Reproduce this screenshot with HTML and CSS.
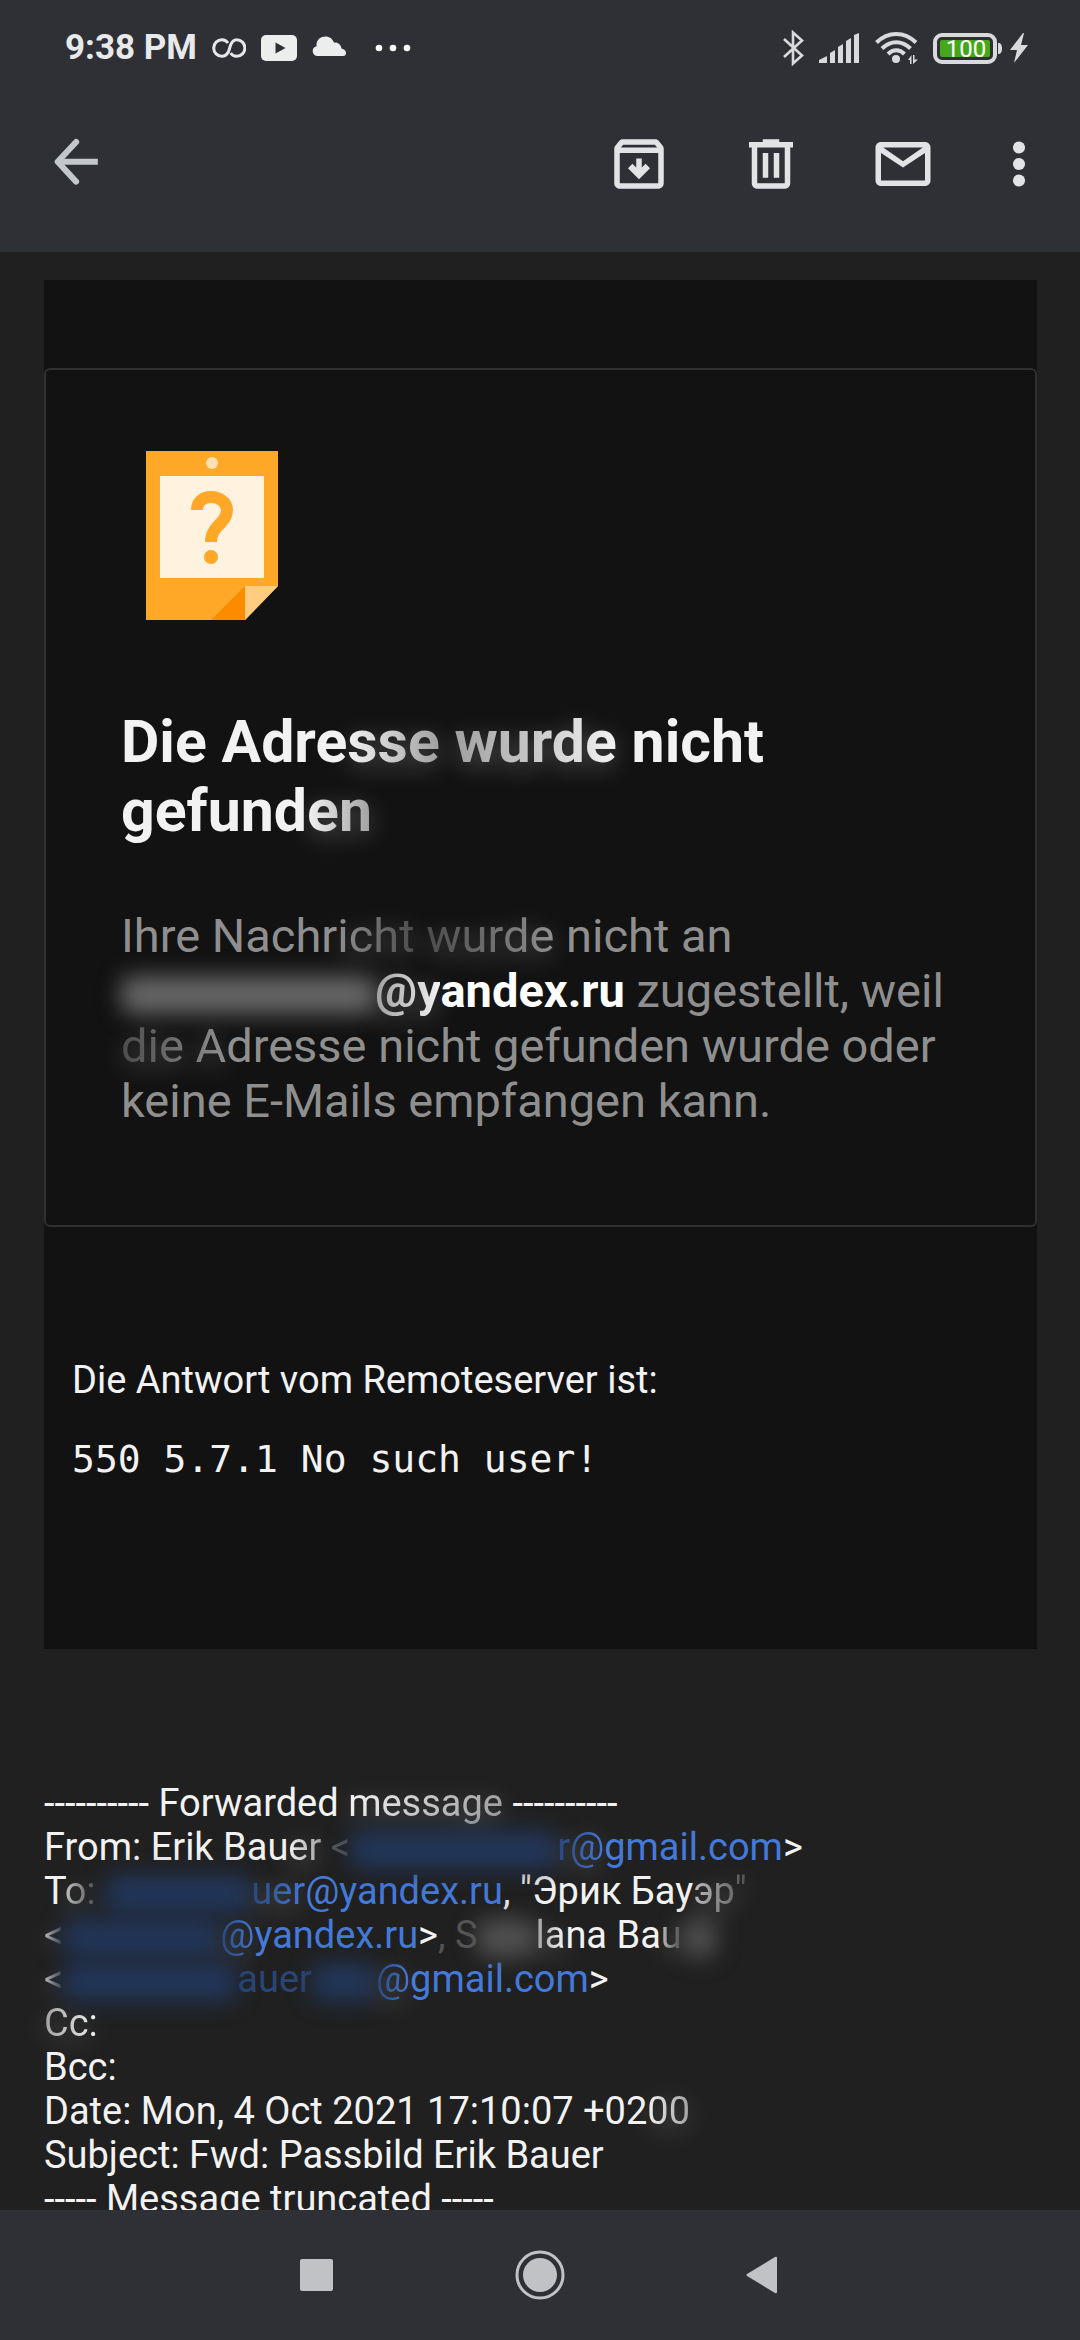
FILE: index.html
```html
<!DOCTYPE html>
<html lang="de">
<head>
<meta charset="utf-8">
<meta name="viewport" content="width=device-width, initial-scale=1">
<title>Die Adresse wurde nicht gefunden</title>
<link rel="stylesheet" href="styles.css">
</head>
<body>
<header class="top">
  <div class="status">
    <div class="status-group">
      <time class="clock">9:38 PM</time>
      <svg width="34" height="20" viewBox="0 0 34 20" fill="none" stroke="#e6e7e8" stroke-width="3"><path d="M16 5C14.500 2.800 12.300 1.700 10 1.700a8.200 8.200 0 0 0 0 16.600c3 0 5-1.800 6.600-4.800l2-6.500c1.400-3.400 3.200-5.300 6-5.300a8.200 8.200 0 0 1 0 16.600c-2.600 0-4.600-1.100-6-3.300"/></svg>
      <svg width="36" height="28" viewBox="0 0 36 28"><rect y="1" width="36" height="26" rx="5" fill="#eceded"/><path d="M14.500 8.500v11l10-5.500z" fill="#2e3035"/></svg>
      <svg width="34" height="28" viewBox="0 0 34 28"><path d="M5 22a5 5 0 0 1-.5-9.800C4 5.500 9 2.500 13.500 2.500c4 0 7 2.300 8.500 6 4-.5 7 2 7.500 6 3 .6 4.500 2.500 4.500 4.500s-1 3-3 3z" fill="#eceded"/></svg>
      <svg class="more-notes" width="36" height="8" viewBox="0 0 36 8" fill="#fff"><circle cx="4" cy="4" r="3.300"/><circle cx="18" cy="4" r="3.300"/><circle cx="32" cy="4" r="3.300"/></svg>
    </div>
    <div class="status-group">
      <svg width="22" height="36" viewBox="0 0 22 36" fill="none" stroke="#d9dadc" stroke-width="2.600"><path d="M2 9l18 16.500-9 8V2.500l9 8L2 27"/></svg>
      <svg width="41" height="32" viewBox="0 0 41 32" fill="#d9dadc"><path d="M0 31v-3l8-4v7zM11 31V21l5-3v13zM19 31V15l5-3v19zM27 31V9l5-3v25zM35 31V3l5-2v30z"/></svg>
      <svg width="43" height="34" viewBox="0 0 43 34"><g fill="none" stroke="#d9dadc" stroke-width="4"><path d="M1.500 11.500c11.500-11.500 28-11.500 39.500 0M7 17.500c8.500-8.500 20-8.500 28.500 0M13 23c5-5 11.500-5 16.500 0"/></g><circle cx="21" cy="28" r="4" fill="#d9dadc"/><path d="M33 29l3.500-5v9h-1.500v-4zM38 24h1.500v4.500H43L38 33z" fill="#d9dadc"/></svg>
      <svg width="96" height="32" viewBox="0 0 96 32"><rect x="2" y="3" width="60" height="27" rx="7" fill="none" stroke="#d9dadc" stroke-width="4"/><rect x="7" y="8" width="50" height="17" rx="2" fill="#46a71c"/><path d="M65 11c3 0 4 2 4 5.500S68 22 65 22z" fill="#d9dadc"/><path d="M90 1L77 18h7l-3 13 14-18h-7l3-12z" fill="#d9dadc"/><text class="charge" x="33" y="25" text-anchor="middle">100</text></svg>
    </div>
  </div>
  <div class="toolbar">
    <button class="tool back" type="button" aria-label="Zurück"><svg viewBox="0 0 24 24" fill="none" stroke="#c5c8ca" stroke-width="2.200"><path d="M20.300 11.200H6"/><path d="M12.400 4L5.700 11.200l6.700 7.200" stroke-linecap="round" stroke-linejoin="round"/></svg></button>
    <div class="tools">
      <button class="tool" type="button" aria-label="Archivieren"><svg viewBox="0 0 24 24" fill="#e2e3e4"><path d="M20.540 5.230l-1.390-1.680C18.880 3.210 18.470 3 18 3H6c-.47 0-.88.21-1.160.55L3.460 5.230C3.170 5.570 3 6.020 3 6.500V19c0 1.100.9 2 2 2h14c1.100 0 2-.9 2-2V6.500c0-.48-.17-.93-.46-1.270zM6.240 5h11.520l.83 1H5.420l.82-1zM5 19V8h14v11H5zM11 10v3.300l-1.400-1.400-1.600 1.600 4 4 4-4-1.600-1.600-1.400 1.400V10z"/></svg></button>
      <button class="tool" type="button" aria-label="Löschen"><svg viewBox="0 0 24 24" fill="#e2e3e4"><path d="M15 4V3H9v1H4v2h1v13c0 1.100.9 2 2 2h10c1.100 0 2-.9 2-2V6h1V4zM17 19H7V6h10zM9 8h2v9H9zM13 8h2v9h-2z"/></svg></button>
      <button class="tool" type="button" aria-label="Als ungelesen markieren"><svg viewBox="0 0 24 24" fill="#e2e3e4"><path d="M20 4H4c-1.100 0-2 .9-2 2v12c0 1.100.9 2 2 2h16c1.100 0 2-.9 2-2V6c0-1.100-.9-2-2-2zm-.8 2L12 11 4.800 6zM4 18V8l8 5.300L20 8v10z"/></svg></button>
      <button class="tool more" type="button" aria-label="Mehr"><svg viewBox="0 0 24 24" fill="#e2e3e4"><circle cx="12" cy="6" r="2.200"/><circle cx="12" cy="12" r="2.200"/><circle cx="12" cy="18" r="2.200"/></svg></button>
    </div>
  </div>
</header>

<main class="mail">
  <article class="notice">
    <section class="card">
      <svg class="note-icon" width="132" height="169" viewBox="0 0 132 169"><path d="M0 0h132v135l-33 34H0z" fill="#ffa726"/><path d="M99 135v34H65z" fill="#fb8c00"/><path d="M99 135h33l-33 34z" fill="#ffcc80"/><rect x="14" y="25" width="104" height="102" fill="#fff3e0"/><circle cx="66" cy="12" r="6" fill="#ffe0b2"/><path d="M51 59c0-8 6-13 14-13s16 5 16 13c0 14-16 15-16 32" fill="none" stroke="#ffa726" stroke-width="12"/><circle cx="65" cy="106" r="7" fill="#ffa726"/></svg>
      <h1 class="title">Die Adre<span class="fade fade-out">sse</span> <span class="fade fade-in">wurde</span> nicht gefund<span class="fade fade-out">en</span></h1>
      <p class="explain">Ihre Nachr<span class="fade dim-out">icht</span> <span class="fade dim-in">wurde</span> nicht an<br><b><span class="smudge light w-recipient"></span><span class="fade fade-in">@y</span>andex.ru</b> zugestellt, weil <span class="fade dim-in">die A</span>dresse nicht gefunden wurde oder keine E-Mails empfangen kann.</p>
    </section>
    <section class="answer">
      <p class="answer-label">Die Antwort vom Remoteserver ist:</p>
      <pre class="answer-text">550 5.7.1 No such user!</pre>
    </section>
  </article>
  <section class="forwarded">
    <div>---------- Forwarded <span class="fade fade-out">message</span> ----------</div>
    <div>From: Erik Bau<span class="fade fade-out">er</span> <span class="ghost">&lt;</span><a href="#"><span class="smudge blue w-from"></span><span class="fade link-in">r@</span>gmail.com</a>&gt;</div>
    <div>T<span class="fade white-out">o:</span> <a href="#"><span class="smudge blue w-to"></span><span class="fade link-in">uer</span>@yandex.ru</a>, "Эрик Бау<span class="fade white-out">эр"</span></div>
    <div><span class="fade white-out">&lt;</span><a href="#"><span class="smudge blue w-second"></span><span class="fade link-in">@</span>yandex.ru</a>&gt;<span class="ghost">,</span> <span class="ghost">S</span><span class="smudge gray w-name"></span><span class="fade fade-in">la</span>na Ba<span class="fade white-out">u</span><span class="smudge gray w-end"></span></div>
    <div><span class="fade white-out">&lt;</span><a href="#"><span class="smudge blue w-third"></span><span class="link-dim">auer</span><span class="smudge blue w-digits"></span><span class="fade link-in">@</span>gmail.com</a>&gt;</div>
    <div><span class="fade fade-in">Cc:</span></div>
    <div>Bcc:</div>
    <div>Date: Mon, 4 Oct 2021 17:10:07 +02<span class="fade fade-out">00</span></div>
    <div>Subject: Fwd: Passbild Erik Bauer</div>
    <div>----- Message truncated -----</div>
  </section>
</main>

<nav class="system">
  <button class="key" type="button" aria-label="Letzte Apps"><svg viewBox="0 0 50 50" fill="#c1c2c5"><rect x="8" y="9" width="33" height="32" rx="2"/></svg></button>
  <button class="key" type="button" aria-label="Startseite"><svg viewBox="0 0 50 50"><circle cx="25" cy="25" r="23" fill="none" stroke="#c1c2c5" stroke-width="3"/><circle cx="25" cy="25" r="17" fill="#c1c2c5"/></svg></button>
  <button class="key" type="button" aria-label="Zurück"><svg viewBox="0 0 50 50" fill="#c1c2c5"><path d="M9 24L37 7q2-1 2 1v34q0 2-2 1L9 26q-1-1 0-2z"/></svg></button>
</nav>
</body>
</html>
```
FILE: styles.css
```css
* { box-sizing: border-box; }

body {
  margin: 0;
  height: 100vh;
  display: flex;
  flex-direction: column;
  overflow: hidden;
  background: #202020;
  color: #f2f2f2;
  font-family: Roboto, "Noto Sans", sans-serif;
  font-size: 38px;
  line-height: 44px;
}

svg { display: block; flex: none; }
p, h1, pre { margin: 0; }

button {
  padding: 0;
  border: 0;
  background: none;
}

/* status bar and toolbar */
.top {
  flex: none;
  padding-bottom: 20px;
  background: #2e3035;
}

.status {
  height: 96px;
  display: flex;
  align-items: center;
  justify-content: space-between;
  padding: 0 51px 0 65px;
}

.status-group {
  display: flex;
  align-items: center;
  gap: 15px;
}

.clock {
  font-size: 35px;
  font-weight: 700;
  color: #e8e9ea;
}

.more-notes { margin-left: 14px; }

.charge {
  font-size: 24px;
  font-weight: 400;
  fill: #fff;
}

.toolbar {
  height: 136px;
  display: flex;
  align-items: center;
  justify-content: space-between;
  padding: 0 28px 0 42px;
}

.tools { display: flex; gap: 66px; }
.tool { width: 66px; height: 66px; }
.tool svg { width: 100%; height: 100%; }
.more { margin-left: -16px; }

/* message */
.mail {
  flex: 1;
  min-height: 0;
  overflow: hidden;
  padding: 28px 43px 0 44px;
}

.notice {
  background: #121212;
  padding: 88px 0 168px;
}

.card {
  border: 2px solid #303030;
  border-radius: 6px;
  padding: 81px 75px 97px;
}

.note-icon { margin-left: 25px; }

.title {
  margin-top: 87px;
  font-size: 59px;
  font-weight: 700;
  line-height: 69px;
}

.explain {
  margin-top: 63px;
  font-size: 47px;
  line-height: 55px;
  color: #8f8f8f;
}

.explain b { color: #fff; }

.answer { padding: 131px 28px 0; }

.answer-text {
  margin-top: 35px;
  font-family: "DejaVu Sans Mono", monospace;
  font-size: 38px;
  line-height: 44px;
}

.forwarded { padding-top: 132px; white-space: nowrap; }

a { color: #4479d9; text-decoration: none; }

/* partly hidden words */
.fade {
  color: transparent;
  background-clip: text;
  -webkit-background-clip: text;
  filter: drop-shadow(0 6px 12px #ffffff40);
}

.fade-out { background-image: linear-gradient(90deg, #f2f2f2, #a0a0a0); }
.fade-in { background-image: linear-gradient(90deg, #a0a0a0, #f2f2f2); }
.white-out { background-image: linear-gradient(90deg, #c0c0c0, #505050); }
.dim-out { background-image: linear-gradient(90deg, #8f8f8f, #4c4c4c); }
.dim-in { background-image: linear-gradient(90deg, #4c4c4c, #8f8f8f); }
.link-in { background-image: linear-gradient(90deg, #2a4678, #4479d9); }
.link-dim { color: #2a4678; }
.ghost { color: #555555; }

.smudge {
  display: inline-block;
  height: 38px;
  vertical-align: middle;
  border-radius: 10px;
  filter: blur(11px);
}

.light { background: #666666; }
.blue { background: #22365a; }
.gray { background: #505050; }

.w-recipient { width: 254px; }
.w-from { width: 207px; }
.w-to { width: 146px; }
.w-second { width: 157px; }
.w-name { width: 58px; }
.w-end { width: 34px; }
.w-third { width: 174px; }
.w-digits { width: 64px; }

/* system navigation */
.system {
  flex: none;
  height: 130px;
  display: flex;
  align-items: center;
  justify-content: center;
  gap: 173px;
  background: #2e3035;
}

.key { width: 50px; height: 50px; }
.key svg { width: 100%; height: 100%; }
```
